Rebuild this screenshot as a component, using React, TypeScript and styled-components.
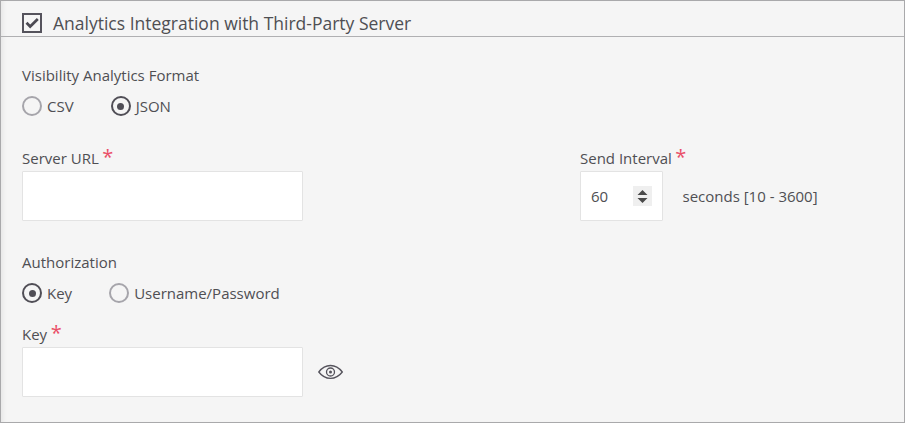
import React from "react";
import styled, { createGlobalStyle } from "styled-components";

const GlobalStyle = createGlobalStyle`
  * { box-sizing: border-box; }
  body { margin: 0; }
`;

const Panel = styled.section`
  width: 905px;
  height: 423px;
  border: 1px solid #a9a9ab;
  background: #f5f5f5;
  box-shadow: inset 5px 0 4px -3px #e6e6e6;
  color: #4f4f53;
  font-family: "Open Sans", sans-serif;
  font-size: 15px;
  line-height: 20px;
  overflow: hidden;
`;

const Header = styled.header`
  display: flex;
  align-items: center;
  gap: 11px;
  height: 36px;
  padding: 8px 0 0 21px;
  border-bottom: 1px solid #b0b0b2;
`;

const Title = styled.h1`
  margin: 0;
  font-size: 17.5px;
  font-weight: 400;
  line-height: 24px;
  white-space: nowrap;
`;

const CheckBox = styled.span`
  display: flex;
  width: 20px;
  height: 20px;
  border: 2px solid #55535c;
  margin-top: 1px;
`;

const Body = styled.div`
  padding: 28px 21px 0;
`;

const Fields = styled.div<{ $top: number }>`
  display: flex;
  margin-top: ${(p) => p.$top}px;
`;

const Field = styled.div<{ $width?: number }>`
  width: ${(p) => (p.$width ? `${p.$width}px` : "auto")};
`;

const Label = styled.div`
  display: flex;
  height: 20px;
  white-space: nowrap;
`;

const Required = styled.span`
  margin: -1px 0 0 3.5px;
  color: #ea4f68;
  font-size: 20px;
  line-height: 20px;
`;

const RadioRow = styled.div`
  display: flex;
  gap: 37px;
  margin-top: 11px;
`;

const Option = styled.label`
  display: flex;
  align-items: center;
  gap: 5px;
  white-space: nowrap;
`;

const Radio = styled.span<{ $on?: boolean }>`
  display: flex;
  align-items: center;
  justify-content: center;
  width: 20px;
  height: 20px;
  border: 2px solid ${(p) => (p.$on ? "#504e56" : "#a6a5ab")};
  border-radius: 50%;

  &::after {
    content: "";
    width: 7px;
    height: 7px;
    border-radius: 50%;
    background: ${(p) => (p.$on ? "#504e56" : "transparent")};
  }
`;

const InputRow = styled.div`
  display: flex;
  align-items: center;
  margin-top: 3px;
`;

const InputBox = styled.div<{ $width: number }>`
  display: flex;
  align-items: center;
  justify-content: space-between;
  width: ${(p) => p.$width}px;
  height: 50px;
  padding: 0 10px;
  border: 1px solid #e3e3e3;
  border-radius: 1px;
  background: #fff;
`;

const Stepper = styled.span`
  display: flex;
  width: 19px;
  height: 20px;
  background: #efefef;
`;

const Hint = styled.span`
  margin-left: 19.5px;
  white-space: nowrap;
`;

const EyeButton = styled.span`
  display: flex;
  margin-left: 15px;
`;

function Eye() {
  return (
    <svg width="26" height="16" viewBox="0 0 26 16" fill="none" stroke="#55535c">
      <path d="M.8 8C4 3.7 8 1.5 12.5 1.5S21 3.7 24.3 8C21 12.3 17 14.3 12.5 14.3S4 12.3.8 8Z" strokeWidth="1.3" />
      <circle cx="12.5" cy="8" r="4" strokeWidth="1.3" />
      <circle cx="12.5" cy="8" r="1.5" fill="#55535c" stroke="none" />
    </svg>
  );
}

export default function App() {
  return (
    <>
      <GlobalStyle />
      <Panel>
        <Header>
          <CheckBox>
            <svg width="16" height="16" viewBox="0 0 16 16" fill="none" stroke="#4b4952" strokeWidth="2.7">
              <path d="M2.5 7.7 6.2 11.5 13.8 4" />
            </svg>
          </CheckBox>
          <Title>Analytics Integration with Third-Party Server</Title>
        </Header>
        <Body>
          <Label>Visibility Analytics Format</Label>
          <RadioRow>
            <Option><Radio />CSV</Option>
            <Option><Radio $on />JSON</Option>
          </RadioRow>
          <Fields $top={32}>
            <Field $width={558}>
              <Label>Server URL<Required>*</Required></Label>
              <InputRow><InputBox $width={281} /></InputRow>
            </Field>
            <Field>
              <Label>Send Interval<Required>*</Required></Label>
              <InputRow>
                <InputBox $width={83}>
                  60
                  <Stepper>
                    <svg width="19" height="20" viewBox="0 0 19 20" fill="#4a4a4a">
                      <path d="M4.5 9 9.5 4 14.5 9ZM4.5 12 9.5 17 14.5 12Z" />
                    </svg>
                  </Stepper>
                </InputBox>
                <Hint>seconds [10 - 3600]</Hint>
              </InputRow>
            </Field>
          </Fields>
          <Fields $top={31}>
            <Field>
              <Label>Authorization</Label>
              <RadioRow>
                <Option><Radio $on />Key</Option>
                <Option><Radio />Username/Password</Option>
              </RadioRow>
            </Field>
          </Fields>
          <Fields $top={21}>
            <Field>
              <Label>Key<Required>*</Required></Label>
              <InputRow>
                <InputBox $width={281} />
                <EyeButton><Eye /></EyeButton>
              </InputRow>
            </Field>
          </Fields>
        </Body>
      </Panel>
    </>
  );
}
